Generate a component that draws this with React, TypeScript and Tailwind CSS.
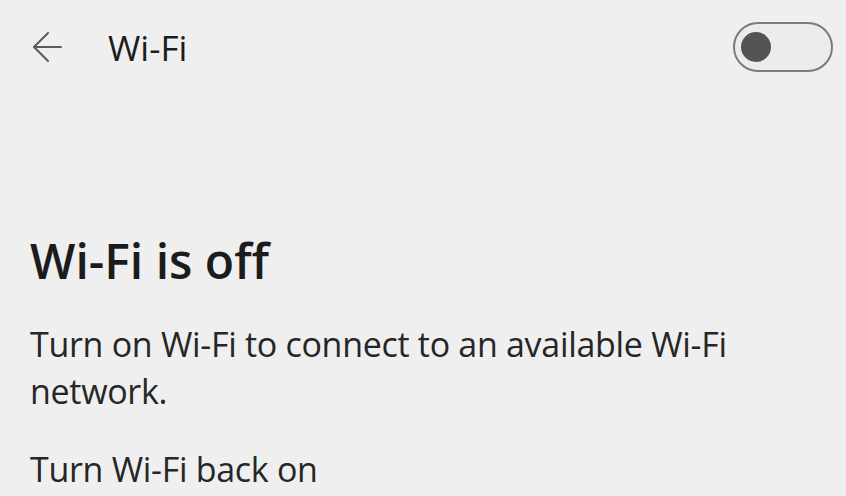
function BackArrow() {
  return (
    <svg aria-hidden viewBox="0 0 32 32" className="h-[32px] w-[32px] shrink-0" fill="none" stroke="#5a5a5a" strokeWidth={2} strokeLinecap="round" strokeLinejoin="round">
      <path d="M3 16H30" />
      <path d="M17 2L3 16L17 30" />
    </svg>
  )
}

function Toggle() {
  return (
    <span
      aria-hidden
      className="flex h-[50px] w-[100px] shrink-0 items-center rounded-full border-2 border-[#7b7b7b] bg-[#ececec] pl-[6px]"
    >
      <span className="h-[30px] w-[30px] rounded-full bg-[#545454]" />
    </span>
  )
}

export default function App() {
  return (
    <div className="h-[496px] w-[846px] overflow-hidden bg-[#efefef] font-['Open_Sans','Noto_Sans',sans-serif] text-[#1c1c1c]">
      <header className="flex h-[94px] items-center pl-[31px] pr-[13px]">
        <BackArrow />
        <h1 className="ml-[45px] flex-1 text-[35px] leading-none">Wi-Fi</h1>
        <Toggle />
      </header>

      <main className="pl-[30px] pt-[139px]">
        <h2 className="text-[48px] font-semibold leading-[56px]">Wi-Fi is off</h2>
        <p className="mt-[32px] max-w-[740px] text-[34px] leading-[47px] tracking-[-0.3px] text-[#262626]">
          Turn on Wi-Fi to connect to an available Wi-Fi network.
        </p>
        <p className="mt-[31px] text-[34px] leading-[47px] tracking-[-0.3px] text-[#262626]">Turn Wi-Fi back on</p>
      </main>
    </div>
  )
}
